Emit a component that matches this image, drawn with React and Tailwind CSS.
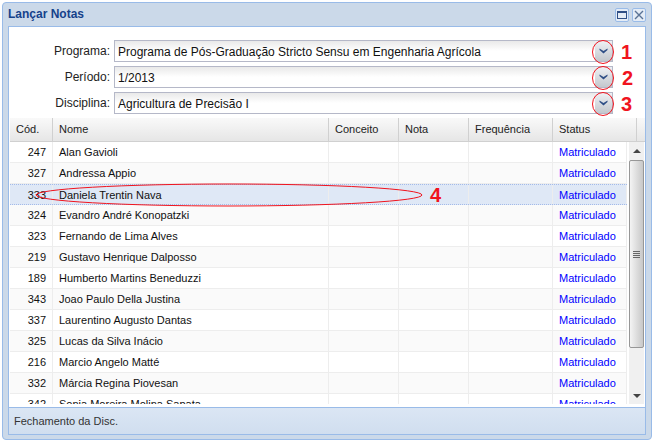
import React from 'react';

const students = [
  ['247', 'Alan Gavioli'],
  ['327', 'Andressa Appio'],
  ['333', 'Daniela Trentin Nava'],
  ['324', 'Evandro André Konopatzki'],
  ['323', 'Fernando de Lima Alves'],
  ['219', 'Gustavo Henrique Dalposso'],
  ['189', 'Humberto Martins Beneduzzi'],
  ['343', 'Joao Paulo Della Justina'],
  ['337', 'Laurentino Augusto Dantas'],
  ['325', 'Lucas da Silva Inácio'],
  ['216', 'Marcio Angelo Matté'],
  ['332', 'Márcia Regina Piovesan'],
  ['342', 'Sonia Moreira Molina Sapata'],
];

const fields = [
  ['Programa:', 'Programa de Pós-Graduação Stricto Sensu em Engenharia Agrícola'],
  ['Período:', '1/2013'],
  ['Disciplina:', 'Agricultura de Precisão I'],
];

function Trigger() {
  return (
    <div className="w-[17px] shrink-0 flex items-center justify-center bg-gradient-to-b from-[#eef1f5] to-[#c4c8cd]">
      <svg width="9" height="6" viewBox="0 0 9 6">
        <path d="M0.5 0.5 L4.5 3 L8.5 0.5 L8.5 2 L4.5 5.5 L0.5 2 Z" fill="#2f4f86" />
      </svg>
    </div>
  );
}

function Field({ label, value }) {
  return (
    <div className="flex h-[22px] items-center text-[12px]">
      <div className="w-[100px] pr-[4px] text-right text-[#222]">{label}</div>
      <div className="w-[499px] h-[22px] flex border border-[#b5b8c8] bg-gradient-to-b from-[#e9e9e9] via-white to-white">
        <div className="flex-1 pl-[3px] leading-[22px] text-[#111]">{value}</div>
        <Trigger />
      </div>
    </div>
  );
}

function Cell({ className, children }) {
  return <div className={`h-full shrink-0 border-r border-[#ededed] px-[6px] leading-[21px] whitespace-nowrap overflow-hidden ${className}`}>{children}</div>;
}

export default function App() {
  return (
    <div className="w-[655px] h-[443px] bg-white p-[2px] text-[11px] font-['Liberation_Sans',sans-serif] relative overflow-hidden">
      <div className="w-[650px] h-[438px] border border-[#99bbe8] rounded-[4px] bg-[#cbd9e9] flex flex-col pl-[5px] pr-[5px] pb-[4px]">
        {/* Title bar */}
        <div className="h-[23px] shrink-0 flex items-center justify-between">
          <span className="pb-[2px] font-bold text-[12px] text-[#15428b]">Lançar Notas</span>
          <div className="flex gap-[3px]">
            <div className="w-[14px] h-[14px] rounded-[2px] border border-[#99bbe8] bg-[#e4ecf6] flex items-center justify-center">
              <div className="w-[10px] h-[8px] border border-[#2f4f86] border-t-2" />
            </div>
            <div className="w-[14px] h-[14px] rounded-[2px] border border-[#99bbe8] bg-[#e4ecf6] flex items-center justify-center">
              <svg width="10" height="10" viewBox="0 0 10 10"><path d="M1 1 L9 9 M9 1 L1 9" stroke="#5a7396" strokeWidth="1.4" /></svg>
            </div>
          </div>
        </div>

        {/* Body */}
        <div className="flex-1 min-h-0 border border-[#99bbe8] bg-white flex flex-col pb-[3px]">
          <div className="h-[91px] shrink-0 pt-[13px] pl-[5px] flex flex-col gap-[4px]">
            {fields.map(([label, value]) => <Field key={label} label={label} value={value} />)}
          </div>

          {/* Grid header */}
          <div className="ml-[1px] h-[24px] shrink-0 flex bg-gradient-to-b from-[#f9f9f9] to-[#e6e6e6] border-b border-[#d0d0d0] text-[#222]">
            {[['Cód.', 'w-[43px]'], ['Nome', 'w-[276px]'], ['Conceito', 'w-[70px]'], ['Nota', 'w-[70px]'], ['Frequência', 'w-[84px]'], ['Status', 'w-[84px]']].map(([title, width]) => (
              <div key={title} className={`${width} shrink-0 border-r border-[#d0d0d0] px-[6px] leading-[23px]`}>{title}</div>
            ))}
          </div>

          {/* Grid body */}
          <div className="flex-1 min-h-0 ml-[1px] flex overflow-hidden">
            <div className="w-[617px] shrink-0 overflow-hidden">
              {students.map(([code, name], i) => (
                <div
                  key={code}
                  className={`h-[21px] flex border-b border-[#ededed] text-[#111] ${i === 2 ? 'bg-[#dfe8f6] border-y border-dotted border-y-[#a3bae9]' : i % 2 ? 'bg-[#fafafa]' : 'bg-white'}`}
                >
                  <Cell className="w-[43px] text-right">{code}</Cell>
                  <Cell className="w-[276px]">{name}</Cell>
                  <Cell className="w-[70px]" />
                  <Cell className="w-[70px]" />
                  <Cell className="w-[84px]" />
                  <Cell className="w-[74px] text-[#0000ff]">Matriculado</Cell>
                </div>
              ))}
            </div>

            {/* Scrollbar */}
            <div className="ml-[2px] w-[15px] shrink-0 bg-[#f0f0f0] flex flex-col items-center">
              <div className="h-[18px] flex items-center">
                <div className="border-x-[4px] border-x-transparent border-b-[4px] border-b-[#444]" />
              </div>
              <div className="w-[15px] h-[188px] rounded-[2px] border border-[#979797] bg-gradient-to-r from-[#f4f4f4] to-[#c8c8c8] flex flex-col items-center justify-center gap-[1px]">
                <div className="w-[7px] h-px bg-[#666]" />
                <div className="w-[7px] h-px bg-[#666]" />
                <div className="w-[7px] h-px bg-[#666]" />
                <div className="w-[7px] h-px bg-[#666]" />
              </div>
              <div className="flex-1 flex items-end pb-[6px]">
                <div className="border-x-[4px] border-x-transparent border-t-[4px] border-t-[#444]" />
              </div>
            </div>
          </div>
        </div>

        {/* Footer */}
        <div className="h-[27px] shrink-0 border border-t-0 border-[#99bbe8] bg-gradient-to-b from-[#dbe6f4] to-[#d0deef] pl-[5px] leading-[26px] text-[#333]">
          Fechamento da Disc.
        </div>
      </div>

      {/* Red annotations drawn over the screenshot */}
      <svg className="absolute left-0 top-0 pointer-events-none" width="655" height="443" viewBox="0 0 655 443" fill="none" stroke="#f0141e" strokeWidth="1">
        <ellipse cx="603" cy="52" rx="10.5" ry="11.5" />
        <ellipse cx="603" cy="78" rx="10.5" ry="11.5" />
        <ellipse cx="603" cy="104" rx="10.5" ry="11.5" />
        <ellipse cx="229" cy="195" rx="193" ry="11" />
      </svg>
      {[['1', 'left-[621px] top-[41px]'], ['2', 'left-[622px] top-[67px]'], ['3', 'left-[621px] top-[93px]'], ['4', 'left-[430px] top-[184px]']].map(([n, pos]) => (
        <span key={n} className={`absolute ${pos} font-bold text-[20px] leading-[22px] text-[#f0141e]`}>{n}</span>
      ))}
    </div>
  );
}
